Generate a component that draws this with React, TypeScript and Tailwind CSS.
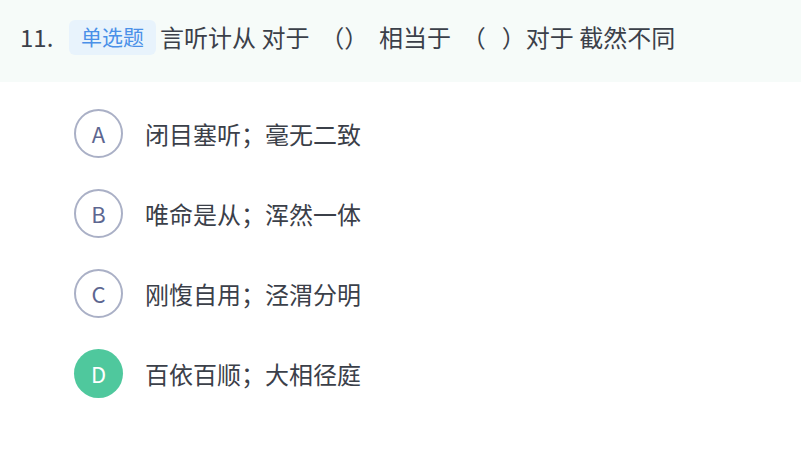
import React from 'react';

const options = [
  { key: 'A', text: '闭目塞听；毫无二致', selected: false },
  { key: 'B', text: '唯命是从；浑然一体', selected: false },
  { key: 'C', text: '刚愎自用；泾渭分明', selected: false },
  { key: 'D', text: '百依百顺；大相径庭', selected: true },
];

export default function App() {
  return (
    <div className="w-[801px] h-[453px] bg-white" style={{ fontFamily: '"Microsoft YaHei", "Noto Sans CJK SC", "Noto Sans", sans-serif' }}>
      <div className="h-[82px] bg-[#f6fbf9] flex items-center pl-[20px] pb-[8px] text-[24px] text-[#3b4049]">
        <span className="w-[49px]">11.</span>
        <span className="h-[35px] px-[12px] rounded-[6px] bg-[#e8f3fc] text-[#4a90e8] text-[21px] flex items-center mr-[4px]">单选题</span>
        <span className="whitespace-pre">言听计从 对于  （）  相当于  （   ）对于 截然不同</span>
      </div>
      <div className="pl-[74px] pt-[27px] flex flex-col gap-[31px]">
        {options.map(o => (
          <div key={o.key} className="flex items-center h-[49px]">
            <div className={`w-[49px] h-[49px] rounded-full flex items-center justify-center text-[22px] ${o.selected ? 'bg-[#4fc89d] text-white' : 'border-2 border-[#aab0c6] text-[#5d6690]'}`}>
              {o.key}
            </div>
            <span className="ml-[22px] text-[24px] text-[#3b4049]">{o.text}</span>
          </div>
        ))}
      </div>
    </div>
  );
}
